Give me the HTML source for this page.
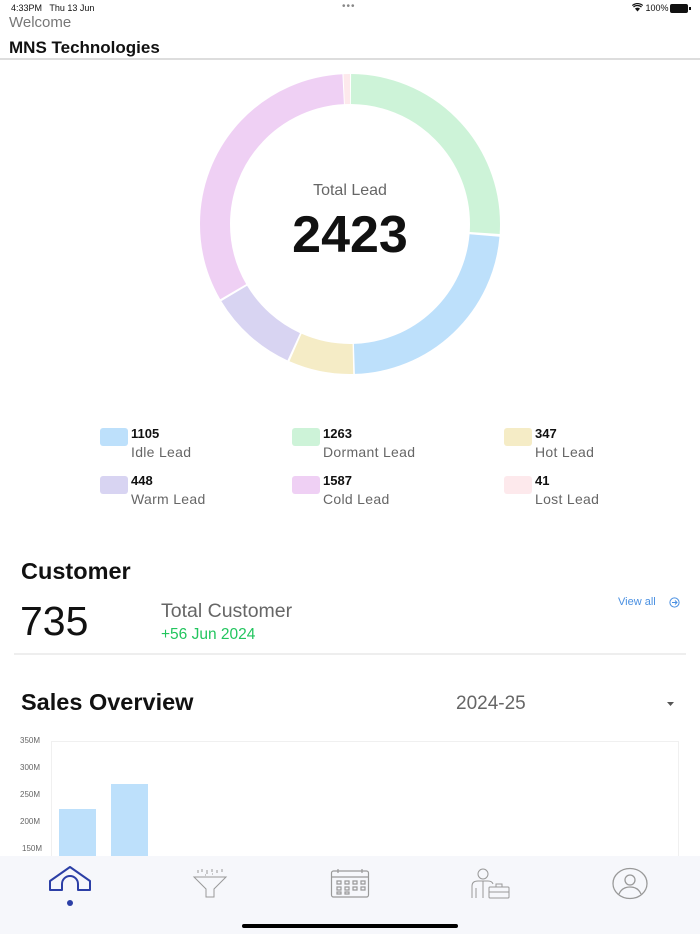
<!DOCTYPE html>
<html><head><meta charset="utf-8"><style>
*{margin:0;padding:0;box-sizing:border-box}
body{width:700px;height:934px;overflow:hidden;background:#fff;font-family:"Liberation Sans",sans-serif;position:relative;color:#111}
.a{position:absolute;white-space:nowrap}
.sw{position:absolute;width:28px;height:18px;border-radius:3px}
.num{font-size:13px;font-weight:bold;color:#111}
.lbl{font-size:14px;color:#666;letter-spacing:0.3px}
</style></head><body>
<div class="a" style="left:11px;top:3px;font-size:9px;color:#111">4:33PM&nbsp;&nbsp; Thu 13 Jun</div>
<div class="a" style="left:342px;top:1px;font-size:10px;color:#888;letter-spacing:1px">•••</div>
<div class="a" style="left:632px;top:3px;font-size:9px;color:#111">
<svg width="11" height="9" viewBox="0 0 11 9" style="vertical-align:-1px"><path d="M5.5 8.5L8 5.6A3.6 3.6 0 0 0 3 5.6Z" fill="#111"/><path d="M1.5 4A6 6 0 0 1 9.5 4M0.3 2.5A8 8 0 0 1 10.7 2.5" stroke="#111" stroke-width="1.2" fill="none"/></svg> 100%</div>
<div class="a" style="left:670px;top:4px;width:18px;height:9px;background:#111;border-radius:2px"></div>
<div class="a" style="left:689px;top:7px;width:1.5px;height:3px;background:#111"></div>
<div class="a" style="left:9px;top:14px;font-size:15px;color:#777">Welcome</div>
<div class="a" style="left:9px;top:38px;font-size:17px;font-weight:bold;color:#111">MNS Technologies</div>
<div class="a" style="left:0;top:58px;width:700px;height:2px;background:#ddd"></div>

<svg class="a" style="left:200px;top:74px" width="300" height="300" viewBox="0 0 300 300">
<g transform="rotate(-90 150 150)" fill="none" stroke-width="30">
<circle cx="150" cy="150" r="135" stroke="#cdf3d8" stroke-dasharray="220 1000" stroke-dashoffset="-1"/>
<circle cx="150" cy="150" r="135" stroke="#bde0fb" stroke-dasharray="196 1000" stroke-dashoffset="-223.5"/>
<circle cx="150" cy="150" r="135" stroke="#f5ecc6" stroke-dasharray="59 1000" stroke-dashoffset="-421"/>
<circle cx="150" cy="150" r="135" stroke="#d8d4f2" stroke-dasharray="81 1000" stroke-dashoffset="-482"/>
<circle cx="150" cy="150" r="135" stroke="#efd0f4" stroke-dasharray="276 1000" stroke-dashoffset="-565"/>
<circle cx="150" cy="150" r="135" stroke="#fde9ec" stroke-dasharray="6 1000" stroke-dashoffset="-842"/>
</g></svg>
<div class="a" style="left:0;width:700px;text-align:center;top:182px;font-size:16px;color:#666">Total Lead</div>
<div class="a" style="left:0;width:700px;text-align:center;top:205px;font-size:52px;font-weight:bold;color:#111">2423</div>

<div class="sw" style="left:100px;top:428px;background:#bde0fb"></div>
<div class="a num" style="left:131px;top:426px">1105</div><div class="a lbl" style="left:131px;top:444px">Idle Lead</div>
<div class="sw" style="left:292px;top:428px;background:#cdf3d8"></div>
<div class="a num" style="left:323px;top:426px">1263</div><div class="a lbl" style="left:323px;top:444px">Dormant Lead</div>
<div class="sw" style="left:504px;top:428px;background:#f5ecc6"></div>
<div class="a num" style="left:535px;top:426px">347</div><div class="a lbl" style="left:535px;top:444px">Hot Lead</div>
<div class="sw" style="left:100px;top:476px;background:#d8d4f2"></div>
<div class="a num" style="left:131px;top:473px">448</div><div class="a lbl" style="left:131px;top:491px">Warm Lead</div>
<div class="sw" style="left:292px;top:476px;background:#efd0f4"></div>
<div class="a num" style="left:323px;top:473px">1587</div><div class="a lbl" style="left:323px;top:491px">Cold Lead</div>
<div class="sw" style="left:504px;top:476px;background:#fde9ec"></div>
<div class="a num" style="left:535px;top:473px">41</div><div class="a lbl" style="left:535px;top:491px">Lost Lead</div>

<div class="a" style="left:21px;top:558px;font-size:23.5px;font-weight:bold">Customer</div>
<div class="a" style="left:20px;top:598px;font-size:41px;color:#111">735</div>
<div class="a" style="left:161px;top:600px;font-size:19.5px;color:#666">Total Customer</div>
<div class="a" style="left:161px;top:626px;font-size:15.5px;color:#22c55e">+56 Jun 2024</div>
<div class="a" style="left:618px;top:596px;font-size:11px;color:#4a90e2">View all</div>
<svg class="a" style="left:669px;top:597px" width="11" height="11" viewBox="0 0 11 11"><circle cx="5.5" cy="5.5" r="4.6" fill="none" stroke="#4a90e2" stroke-width="1"/><path d="M3 5.5H8M6 3.5L8 5.5L6 7.5" fill="none" stroke="#4a90e2" stroke-width="1"/></svg>
<div class="a" style="left:14px;top:653px;width:672px;height:2px;background:#eee"></div>

<div class="a" style="left:21px;top:689px;font-size:23.5px;font-weight:bold">Sales Overview</div>
<div class="a" style="left:456px;top:693px;font-size:19px;color:#666">2024-25</div>
<svg class="a" style="left:667px;top:702px" width="7" height="4"><path d="M0 0H7L3.5 4Z" fill="#555"/></svg>

<div class="a" style="left:51px;top:741px;width:628px;height:120px;border:1px solid #f0f0f0;border-bottom:none"></div>
<div class="a" style="left:20px;top:736px;font-size:8px;color:#666">350M</div>
<div class="a" style="left:20px;top:763px;font-size:8px;color:#666">300M</div>
<div class="a" style="left:20px;top:790px;font-size:8px;color:#666">250M</div>
<div class="a" style="left:20px;top:817px;font-size:8px;color:#666">200M</div>
<div class="a" style="left:22px;top:844px;font-size:8px;color:#666">150M</div>
<div class="a" style="left:59px;top:809px;width:37px;height:50px;background:#bde0fb"></div>
<div class="a" style="left:111px;top:784px;width:37px;height:75px;background:#bde0fb"></div>

<div class="a" style="left:0;top:856px;width:700px;height:78px;background:#f6f7fb"></div>
<svg class="a" style="left:48px;top:866px" width="44" height="42" viewBox="0 0 44 42">
<path d="M2 24V15L22 1L42 15V24H30V18A8 8 0 0 0 14 18V24Z" fill="none" stroke="#2c3fa6" stroke-width="2" stroke-linejoin="round"/>
<circle cx="22" cy="37" r="3" fill="#2c3fa6"/></svg>
<svg class="a" style="left:192px;top:868px" width="36" height="30" viewBox="0 0 36 30" fill="none" stroke="#999" stroke-width="1">
<path d="M2 9H34L22 21V29H14V21Z"/><path d="M6 2V5M10 1V4M15 2V6M20 1V4M25 2V5M30 1V4M13 7h1M20 6h1"/></svg>
<svg class="a" style="left:330px;top:868px" width="40" height="30" viewBox="0 0 40 30" fill="none" stroke="#999" stroke-width="1.2">
<rect x="1.5" y="3" width="37" height="26" rx="2"/><path d="M1.5 9H38.5M8 1V5M32 1V5"/>
<path d="M7 13h4v3h-4zM15 13h4v3h-4zM23 13h4v3h-4zM31 13h4v3h-4zM7 19h4v3h-4zM15 19h4v3h-4zM23 19h4v3h-4zM31 19h4v3h-4zM7 24h4v2h-4zM15 24h4v2h-4z"/></svg>
<svg class="a" style="left:469px;top:866px" width="42" height="33" viewBox="0 0 42 33" fill="none" stroke="#999" stroke-width="1">
<circle cx="14" cy="8" r="5"/><path d="M3 32V20Q3 15 9 15H19Q23 15 24 18M7 22V32M14 15V32"/>
<rect x="20" y="21" width="20" height="11" rx="1"/><path d="M27 21V18H33V21M20 26H40"/></svg>
<svg class="a" style="left:611px;top:867px" width="38" height="33" viewBox="0 0 38 33" fill="none" stroke="#999" stroke-width="1.3">
<ellipse cx="19" cy="16.5" rx="17" ry="15"/><circle cx="19" cy="13" r="5"/><path d="M8 27Q11 20 19 20Q27 20 30 27"/></svg>
<div class="a" style="left:242px;top:924px;width:216px;height:4px;border-radius:2px;background:#000"></div>
</body></html>
